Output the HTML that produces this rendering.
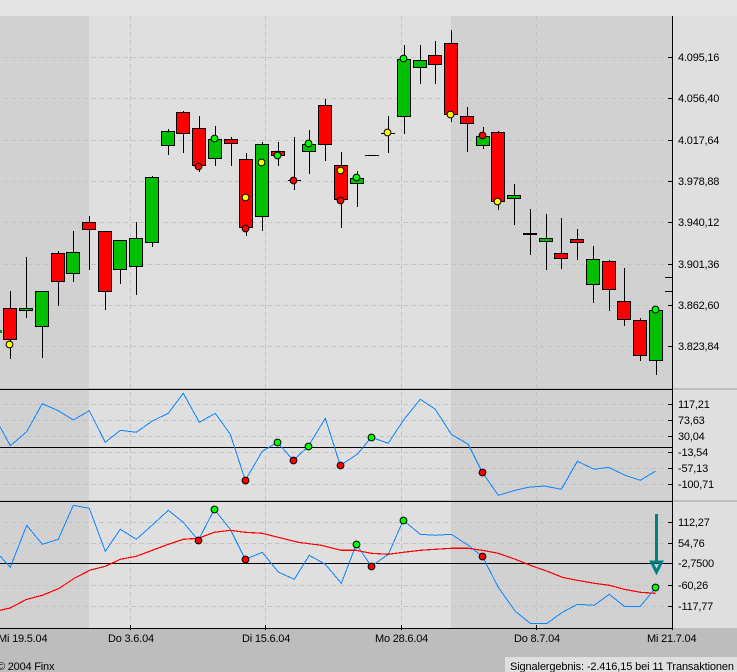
<!DOCTYPE html>
<html>
<head>
<meta charset="utf-8">
<style>
html,body{margin:0;padding:0;background:#dfdfdf;width:737px;height:672px;overflow:hidden}
svg{display:block;position:absolute;left:0;top:0}
text{font-family:"Liberation Sans",sans-serif;font-size:11px;fill:#000}
</style>
</head>
<body>
<svg width="737" height="672" viewBox="0 0 737 672" xmlns="http://www.w3.org/2000/svg">
<defs>
<pattern id="d" width="4" height="4" patternUnits="userSpaceOnUse">
<rect width="4" height="4" fill="#d2d2d2"/>
<rect x="1" y="1" width="1" height="1" fill="#c9c9c9"/>
<rect x="3" y="3" width="1" height="1" fill="#c9c9c9"/>
</pattern>
</defs>
<rect width="737" height="16" fill="#e3e3e3"/>
<rect y="16" width="737" height="612" fill="#dfdfdf"/>
<rect y="628" width="737" height="44" fill="#bdbdbd"/>
<rect x="0" y="16" width="89" height="612" fill="url(#d)"/>
<rect x="451" y="16" width="221" height="612" fill="url(#d)"/>

<!-- grid -->
<g fill="none" stroke="#c5c5c5" stroke-width="1" stroke-dasharray="5 3" shape-rendering="crispEdges">
<path d="M3 57.5H664M3 98.5H664M3 140.5H664M3 181.5H664M3 222.5H664M3 264.5H664M3 305.5H664M3 346.5H664"/>
<path d="M3 404.5H664M3 420.5H664M3 436.5H664M3 452.5H664M3 468.5H664M3 484.5H664"/>
<path d="M3 522.5H664M3 543.5H664M3 585.5H664M3 606.5H664"/>
<path d="M130.5 16V628M265.5 16V628M401.5 16V628M536.5 16V628"/>
</g>

<!-- separators -->
<rect y="388" width="737" height="2" fill="#bdbdbd"/>
<rect y="500" width="737" height="2" fill="#bdbdbd"/>
<rect y="389" width="672" height="1" fill="#000"/>
<rect y="501" width="672" height="1" fill="#000"/>
<rect y="447" width="672" height="1" fill="#000"/>
<rect y="563" width="672" height="1" fill="#000"/>
<rect y="628" width="672" height="1" fill="#000"/>

<!-- wicks -->
<path fill="none" stroke="#000" stroke-width="1" shape-rendering="crispEdges" d="M10.5 291V359M26.5 257V318M42.5 291V358M58.5 251V306M73.5 231V282M89.5 216V270M105.5 231V310M120.5 240V284M136.5 222V295M152.5 176V247M168.5 129V155M183.5 111V153M199.5 116V172M215.5 126V166M231.5 137V166M246.5 153V236M262.5 142V231M278.5 142V166M294.5 137V190M309.5 130V174M325.5 99V161M341.5 152V228M357.5 171V207M388.5 116V153M404.5 45V134M420.5 45V84M435.5 41V84M451.5 30V122M467.5 107V152M483.5 127V149M498.5 131V210M514.5 184V225M530.5 209V255M546.5 214V270M561.5 218V269M577.5 229V260M593.5 246V303M609.5 260V311M624.5 268V326M640.5 318V361M656.5 310V375"/>
<!-- doji bars -->
<path fill="none" stroke="#000" stroke-width="1" shape-rendering="crispEdges" d="M288 180.5H301M365 155.5H379M381 133.5H395"/>
<rect x="523" y="233" width="14" height="2" fill="#000"/>
<rect x="0" y="330" width="2" height="3" fill="#00a000" stroke="none"/>

<!-- red bodies -->
<path fill="#ff0000" stroke="#000" stroke-width="1" shape-rendering="crispEdges" d="M3.5 308.5h13v31h-13zM51.5 253.5h13v28h-13zM82.5 222.5h13v7h-13zM98.5 231.5h13v60h-13zM176.5 112.5h13v21h-13zM192.5 128.5h13v37h-13zM224.5 139.5h13v4h-13zM239.5 159.5h13v68h-13zM271.5 151.5h13v4h-13zM318.5 105.5h13v39h-13zM334.5 165.5h13v34h-13zM428.5 55.5h13v9h-13zM444.5 43.5h13v71h-13zM460.5 116.5h13v7h-13zM491.5 132.5h13v69h-13zM554.5 253.5h13v5h-13zM570.5 239.5h13v3h-13zM602.5 261.5h13v28h-13zM617.5 301.5h13v18h-13zM633.5 320.5h13v35h-13z"/>
<!-- green bodies -->
<path fill="#00c000" stroke="#000" stroke-width="1" shape-rendering="crispEdges" d="M19.5 308.5h13v2h-13zM35.5 291.5h13v35h-13zM66.5 252.5h13v21h-13zM113.5 240.5h13v29h-13zM129.5 238.5h13v28h-13zM145.5 177.5h13v65h-13zM161.5 131.5h13v14h-13zM208.5 139.5h13v19h-13zM255.5 144.5h13v72h-13zM302.5 144.5h13v7h-13zM350.5 178.5h13v5h-13zM397.5 59.5h13v57h-13zM413.5 60.5h13v7h-13zM476.5 136.5h13v9h-13zM507.5 195.5h13v3h-13zM539.5 238.5h13v3h-13zM586.5 259.5h13v25h-13zM649.5 310.5h13v50h-13z"/>

<!-- main dots -->
<g stroke="#000" stroke-width="1">
<g fill="#ffff00">
<circle cx="9.5" cy="344.5" r="3.4"/><circle cx="245.5" cy="197.5" r="3.4"/><circle cx="261.5" cy="162.5" r="3.4"/><circle cx="340.5" cy="170.5" r="3.4"/><circle cx="387.5" cy="132.5" r="3.4"/><circle cx="450.5" cy="114.5" r="3.4"/><circle cx="497.5" cy="201.5" r="3.4"/>
</g>
<g fill="#ff0000">
<circle cx="198.5" cy="166.5" r="3.4"/><circle cx="245.5" cy="228.5" r="3.4"/><circle cx="293.5" cy="180.5" r="3.4"/><circle cx="340.5" cy="200.5" r="3.4"/><circle cx="482.5" cy="135.5" r="3.4"/>
</g>
<g fill="#00ff00">
<circle cx="214.5" cy="138.5" r="3.4"/><circle cx="277.5" cy="155.5" r="3.4"/><circle cx="308.5" cy="143.5" r="3.4"/><circle cx="356.5" cy="177.5" r="3.4"/><circle cx="403.5" cy="58.5" r="3.4"/><circle cx="655.5" cy="309.5" r="3.4"/>
</g>
</g>

<!-- indicator 1 -->
<polyline fill="none" stroke="#0a84ff" stroke-width="1" shape-rendering="crispEdges" points="0,426.7 10.3,445.7 26.7,431.7 42.3,403.7 58.3,410.7 73.3,420 89.3,410.7 105.3,442.3 120.3,430.3 136.3,432.3 152.3,421 168.3,413.3 183.3,393.3 199.3,422.3 215.3,413.3 230.3,434.3 245.3,480.3 262.3,451.3 277.3,442.3 293.3,460.3 308.3,446.3 325.3,418.3 340.3,465.3 357.3,454.3 371.3,437.3 388.3,443.3 403.3,420.3 420.3,399.3 435.3,409.3 451.3,434.3 468.3,444.3 482.3,472.3 498.3,495.3 515.3,490.3 528.3,487.3 544.3,486 561.3,489.3 577.3,461.3 594.3,469.3 608.3,467.3 625.3,475.3 640.3,480.3 655.3,471.3"/>
<g stroke="#000" stroke-width="1">
<g fill="#ff0000"><circle cx="245.5" cy="480.5" r="3.4"/><circle cx="293.5" cy="460.5" r="3.4"/><circle cx="340.5" cy="465.5" r="3.4"/><circle cx="482.5" cy="472.5" r="3.4"/></g>
<g fill="#00ff00"><circle cx="277.5" cy="442.5" r="3.4"/><circle cx="308.5" cy="446.5" r="3.4"/><circle cx="371.5" cy="437.5" r="3.4"/></g>
</g>

<!-- indicator 2 -->
<polyline fill="none" stroke="#0a84ff" stroke-width="1" shape-rendering="crispEdges" points="0,556 10.3,567.3 26.7,525.3 42.3,544.3 58.3,539.3 73.3,505.3 89.3,508.3 105.3,551.3 120.3,529.3 136.3,539.3 152.3,525 168.3,510.3 183.3,522.3 198.3,540.3 214.3,509.3 230.3,529.3 245.3,559.3 262.3,552.3 278.3,572 294.3,579.3 309.3,555.3 325.3,564.3 341.3,583.3 356.3,544.3 371.3,566.3 388.3,554.3 403.3,520.3 420.3,534.3 435.3,535.3 451.3,534.3 468.3,545.3 482.3,556.3 498.3,587.3 515.3,611.3 530.3,623.3 547.3,623.3 562.3,612.3 577.3,604.3 594.3,605.3 609.3,594.3 624.3,606.3 640.3,606.3 655.3,588.3"/>
<polyline fill="none" stroke="#ff0000" stroke-width="1.2" shape-rendering="crispEdges" points="0,610.3 10,608 26.7,599.3 42.3,595.3 59.3,588.3 74.3,578.3 90.3,570 105.3,566.3 120.3,559.3 136.3,556.3 152.3,550.3 168.3,544.3 183.3,539.3 198.3,538.3 214.3,532.3 230.3,530.3 245.3,532.3 262.3,533.3 278.3,537.3 298.3,542.3 321.3,545.3 341.3,550.3 356.3,550.3 371.3,553.3 388.3,554.3 403.3,552.3 420.3,550.3 435.3,549.3 451.3,548.3 468.3,548.3 482.3,550.3 498.3,553.3 515.3,559.3 530.3,565.3 547.3,571.3 562.3,577.3 577.3,580.3 594.3,583.3 609.3,585.3 624.3,589.3 640.3,592.3 655.3,593.3"/>
<g stroke="#000" stroke-width="1">
<g fill="#ff0000"><circle cx="198.5" cy="540.5" r="3.4"/><circle cx="245.5" cy="559.5" r="3.4"/><circle cx="371.5" cy="566.5" r="3.4"/><circle cx="482.5" cy="556.5" r="3.4"/></g>
<g fill="#00ff00"><circle cx="214.5" cy="509.5" r="3.4"/><circle cx="356.5" cy="544.5" r="3.4"/><circle cx="403.5" cy="520.5" r="3.4"/><circle cx="655.5" cy="587.5" r="3.4"/></g>
</g>

<!-- arrow -->
<rect x="655" y="514" width="3" height="47" fill="#008080"/>
<polygon points="651.5,562 661.5,562 656.5,572" fill="none" stroke="#008080" stroke-width="3"/>

<!-- axes -->
<rect x="672" y="16" width="1" height="614" fill="#000"/>
<path stroke="#000" stroke-width="1" fill="none" shape-rendering="crispEdges" d="M668 57.5H672M668 98.5H672M668 140.5H672M668 181.5H672M668 222.5H672M668 264.5H672M665 277.5H672M665 291.5H672M668 305.5H672M668 346.5H672M668 404.5H672M668 420.5H672M668 436.5H672M668 452.5H672M668 468.5H672M668 484.5H672M668 522.5H672M668 543.5H672M668 563.5H672M668 585.5H672M668 606.5H672M130.5 625V630M265.5 625V630M401.5 625V630M536.5 625V630"/>

<!-- labels -->
<g letter-spacing="-0.2">
<text x="678" y="61">4.095,16</text>
<text x="678" y="102">4.056,40</text>
<text x="678" y="144">4.017,64</text>
<text x="678" y="185">3.978,88</text>
<text x="678" y="226">3.940,12</text>
<text x="678" y="268">3.901,36</text>
<text x="678" y="309">3.862,60</text>
<text x="678" y="350">3.823,84</text>
<text x="678" y="408">117,21</text>
<text x="678" y="424">73,63</text>
<text x="678" y="440">30,04</text>
<text x="678" y="456">-13,54</text>
<text x="678" y="472">-57,13</text>
<text x="678" y="488">-100,71</text>
<text x="678" y="526">112,27</text>
<text x="678" y="547">54,76</text>
<text x="678" y="567">-2,7500</text>
<text x="678" y="589">-60,26</text>
<text x="678" y="610">-117,77</text>
<text x="-2" y="642">Mi 19.5.04</text>
<text x="108" y="642">Do 3.6.04</text>
<text x="242" y="642">Di 15.6.04</text>
<text x="375" y="642">Mo 28.6.04</text>
<text x="514" y="642">Do 8.7.04</text>
<text x="647" y="642">Mi 21.7.04</text>
<text x="-3" y="670">© 2004 Finx</text>
</g>
<rect x="505" y="657" width="232" height="15" fill="#dfdfdf"/>
<text x="510" y="670" textLength="224" lengthAdjust="spacing">Signalergebnis: -2.416,15 bei 11 Transaktionen</text>
</svg>
</body>
</html>
